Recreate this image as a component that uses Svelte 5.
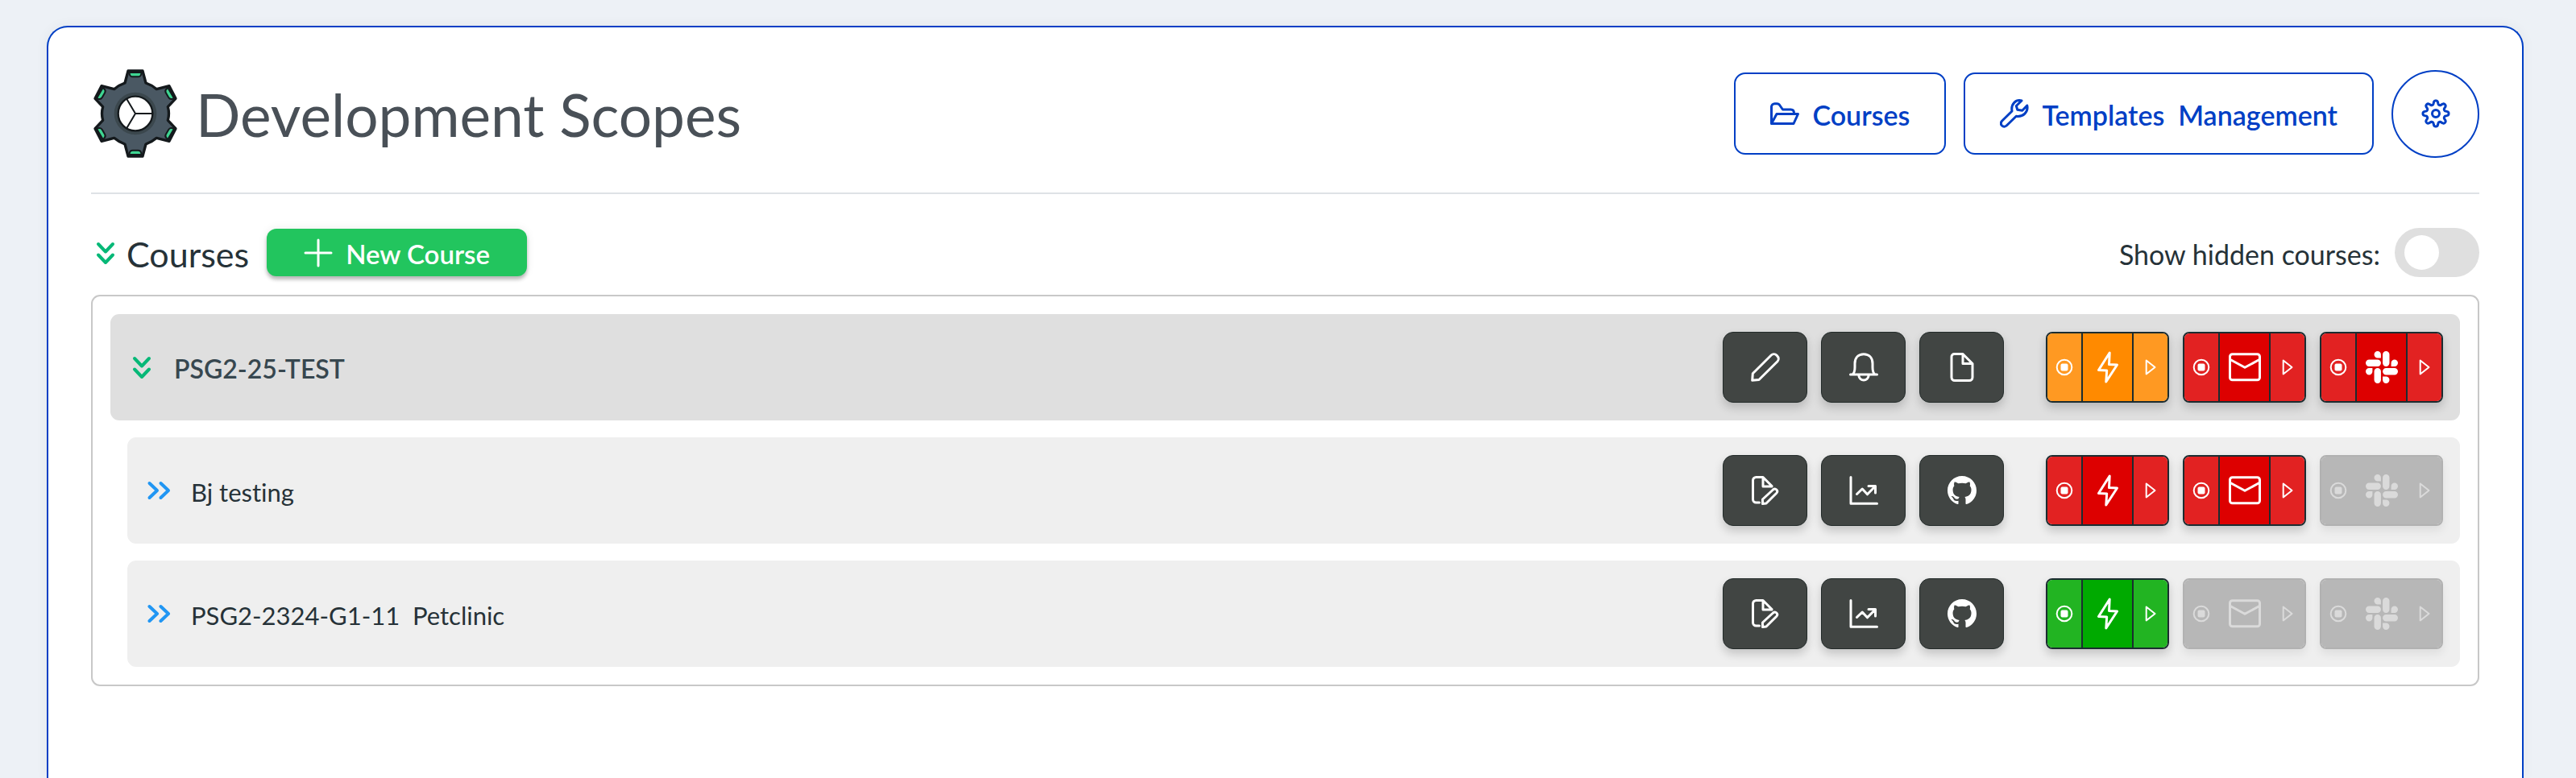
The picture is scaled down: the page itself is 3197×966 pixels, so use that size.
<script>
  // Outline of the eight-toothed settings cog, centred in a 36-unit box.
  const cogPoints = Array.from({ length: 192 }, (_, i) => {
    const a = (i / 192) * Math.PI * 2;
    const r = 13.7 + 2.3 * (Math.tanh(1.6 * Math.cos(8 * a)) / Math.tanh(1.6));
    return `${(18 + r * Math.sin(a)).toFixed(2)},${(18 - r * Math.cos(a)).toFixed(2)}`;
  }).join(' ');

  const teeth = [0, 60, 120, 180, 240, 300];

  const courseActions = [
    { icon: 'pencil', label: 'Edit course' },
    { icon: 'bell', label: 'Notifications' },
    { icon: 'file', label: 'Documents' }
  ];
  const scopeActions = [
    { icon: 'fileEdit', label: 'Edit scope' },
    { icon: 'chart', label: 'Statistics' },
    { icon: 'github', label: 'Repository' }
  ];

  const rows = [
    { name: 'PSG2-25-TEST', parent: true, actions: courseActions, states: ['orange', 'red', 'red'] },
    { name: 'Bj testing', parent: false, actions: scopeActions, states: ['red', 'red', 'off'] },
    { name: 'PSG2-2324-G1-11  Petclinic', parent: false, actions: scopeActions, states: ['green', 'off', 'off'] }
  ];
  const channels = ['bolt', 'mail', 'slack'];

  let showHidden = $state(false);
</script>

{#snippet doubleDown()}
  <svg class="chev down" viewBox="0 0 36 36" aria-hidden="true"><path d="M9 7l9 9.500 9-9.500M9 20.500l9 9.500 9-9.500" /></svg>
{/snippet}

{#snippet doubleRight()}
  <svg class="chev right" viewBox="0 0 36 36" aria-hidden="true"><path d="M6.500 9l9.500 9-9.500 9M20.500 9l9.500 9-9.500 9" /></svg>
{/snippet}

{#snippet glyph(name)}
  {#if name === 'pencil'}
    <svg class="i36" viewBox="0 0 36 36" aria-hidden="true"><path d="M1.700 34.300 2.300 25.700 25.200 3C27 1.200 30 1.200 32.200 3.300 34.800 5.800 34.800 8.800 33 10.700L10 33.500Z" /></svg>
  {:else if name === 'bell'}
    <svg class="i36" viewBox="0 0 36 36" aria-hidden="true"><path d="M1.500 27H4c2.200-1.600 3-5 3-9v-4.500C7 6 11.500 1.700 18 1.700S29 6 29 13.500V18c0 4 .8 7.400 3 9h2.500ZM11.800 28c.4 3.600 3 6 6.200 6s5.800-2.400 6.200-6" /></svg>
  {:else if name === 'file'}
    <svg class="i36" viewBox="0 0 36 36" aria-hidden="true"><path d="M8.500 1.500H19L31 13.500V30.500a4 4 0 0 1-4 4H9a4 4 0 0 1-4-4V5A3.500 3.500 0 0 1 8.500 1.500ZM19 1.500V13.500H31" /></svg>
  {:else if name === 'fileEdit'}
    <svg class="i36" viewBox="0 0 36 36" aria-hidden="true"><path d="M10.500 33H6.500a4 4 0 0 1-4-4V5.500a4 4 0 0 1 4-4H15L26 12.500M15 1.500V13H26M14.500 34.500V29L27.500 17c1.400-1.200 3.200-1.100 4.300 0s1.200 2.900 0 4.200L19 34Z" /></svg>
  {:else if name === 'chart'}
    <svg class="i36" viewBox="0 0 36 36" aria-hidden="true"><path d="M2 1.500V34.300H34.500M9.500 22.500 16.200 16 22.500 22.800 32.500 12.500M24 12.500H32.500V21" /></svg>
  {:else if name === 'github'}
    <svg class="i36 solid" viewBox="0 0 16 16" aria-hidden="true"><path d="M8 0C3.580 0 0 3.580 0 8c0 3.540 2.290 6.530 5.470 7.590.4.070.55-.17.55-.38 0-.19-.01-.82-.01-1.490-2.010.37-2.530-.49-2.690-.94-.09-.23-.48-.94-.82-1.130-.28-.15-.68-.52-.01-.53.63-.01 1.080.58 1.230.82.72 1.210 1.870.87 2.330.66.07-.52.28-.87.51-1.070-1.780-.2-3.640-.89-3.640-3.950 0-.87.31-1.590.82-2.150-.08-.2-.36-1.020.08-2.120 0 0 .67-.21 2.200.82.64-.18 1.320-.27 2-.27.68 0 1.360.09 2 .27 1.530-1.040 2.200-.82 2.200-.82.44 1.100.16 1.920.08 2.120.51.56.82 1.270.82 2.150 0 3.070-1.870 3.750-3.650 3.950.29.25.54.73.54 1.480 0 1.070-.01 1.930-.01 2.200 0 .21.15.46.55.38A8.013 8.013 0 0 0 16 8c0-4.420-3.580-8-8-8z" /></svg>
  {:else if name === 'bolt'}
    <svg class="i40" viewBox="0 0 40 40" aria-hidden="true"><path d="M22.200 2 8.500 23.500 18.700 24 17.800 38 31.500 17 21.500 16.500Z" /></svg>
  {:else if name === 'mail'}
    <svg class="i40" viewBox="0 0 40 40" aria-hidden="true"><path d="M4.500 3.700H35.500a3 3 0 0 1 3 3V32.800a3 3 0 0 1-3 3H4.500a3 3 0 0 1-3-3V6.700a3 3 0 0 1 3-3ZM2 10.500 20 20.300 38 10.500" /></svg>
  {:else if name === 'slack'}
    <svg class="i40 solid" viewBox="0 0 24 24" aria-hidden="true"><path d="M5.042 15.165a2.528 2.528 0 0 1-2.520 2.523A2.528 2.528 0 0 1 0 15.165a2.527 2.527 0 0 1 2.522-2.520h2.520v2.520zM6.313 15.165a2.527 2.527 0 0 1 2.521-2.520 2.527 2.527 0 0 1 2.521 2.520v6.313A2.528 2.528 0 0 1 8.834 24a2.528 2.528 0 0 1-2.521-2.522v-6.313zM8.834 5.042a2.528 2.528 0 0 1-2.521-2.520A2.528 2.528 0 0 1 8.834 0a2.528 2.528 0 0 1 2.521 2.522v2.520H8.834zM8.834 6.313a2.528 2.528 0 0 1 2.521 2.521 2.528 2.528 0 0 1-2.521 2.521H2.522A2.528 2.528 0 0 1 0 8.834a2.528 2.528 0 0 1 2.522-2.521h6.312zM18.956 8.834a2.528 2.528 0 0 1 2.522-2.521A2.528 2.528 0 0 1 24 8.834a2.528 2.528 0 0 1-2.522 2.521h-2.522V8.834zM17.688 8.834a2.528 2.528 0 0 1-2.523 2.521 2.527 2.527 0 0 1-2.520-2.521V2.522A2.527 2.527 0 0 1 15.165 0a2.528 2.528 0 0 1 2.523 2.522v6.312zM15.165 18.956a2.528 2.528 0 0 1 2.523 2.522A2.528 2.528 0 0 1 15.165 24a2.527 2.527 0 0 1-2.520-2.522v-2.522h2.520zM15.165 17.688a2.527 2.527 0 0 1-2.520-2.523 2.526 2.526 0 0 1 2.520-2.520h6.313A2.527 2.527 0 0 1 24 15.165a2.528 2.528 0 0 1-2.522 2.523h-6.313z" /></svg>
  {/if}
{/snippet}

<main class="page">
  <div class="card">
    <header>
      <svg class="logo" viewBox="-165 -165 330 330" aria-hidden="true">
        <path
          d="M-27-159H27L39-114Q62-106 79-91L126-103 150-56 121-25Q128 0 121 25L150 56 126 103 79 91Q62 106 39 114L27 159H-27L-39 114Q-62 106-79 91L-126 103-150 56-121 25Q-128 0-121-25L-150-56-126-103-79-91Q-62-106-39-114Z"
          fill="#4a5863" stroke="#14191c" stroke-width="10" stroke-linejoin="round" />
        {#each teeth as angle}
          <path d="M-22-153H22V-148Q20-137 10-137H-10Q-20-137-22-148Z" transform="rotate({angle})" fill="#3fd592" stroke="#14191c" stroke-width="6" />
        {/each}
        <circle r="79" fill="#3b474d" stroke="none" />
        <circle r="64" fill="#fff" stroke="#14191c" stroke-width="7" />
        <path d="M64 0H0L-32-54M0 0-32 54" fill="none" stroke="#14191c" stroke-width="6" />
      </svg>
      <h1>Development Scopes</h1>
      <nav>
        <button class="outline">
          <svg class="i36" viewBox="0 0 36 36" aria-hidden="true"><path d="M1.500 30.500V9.500A4 4 0 0 1 5.500 5.700H8.500C10 5.700 10.500 6 11.300 7L15.500 13H25.500C28 13 29.500 14.500 29.500 17.500M1.500 30.500 8 18.500H34.500L29 30.500Z" /></svg>
          <span>Courses</span>
        </button>
        <button class="outline">
          <svg class="i36" viewBox="0 0 36 36" aria-hidden="true"><path d="M27 2C20 0 13.500 6 15 15L2.800 27C.9 29 1 31.300 2.600 33c1.700 1.700 4.100 1.600 5.900-.2L20.300 21.200C29 22.500 35.500 16 33.800 8L27.800 14.300 21.800 13.200 20.300 8.500Z" /></svg>
          <span>Templates  Management</span>
        </button>
        <button class="outline round" aria-label="Settings">
          <svg class="i36" viewBox="0 0 36 36" aria-hidden="true"><polygon points={cogPoints} /><circle cx="18" cy="18" r="4.500" /></svg>
        </button>
      </nav>
    </header>

    <section>
      <div class="bar">
        {@render doubleDown()}
        <h2>Courses</h2>
        <button class="new">
          <svg class="i36" viewBox="0 0 36 36" aria-hidden="true"><path d="M18 2V34M2 18H34" /></svg>
          <span>New Course</span>
        </button>
        <label for="show-hidden">Show hidden courses:</label>
        <input id="show-hidden" type="checkbox" role="switch" bind:checked={showHidden} />
      </div>

      <ul class="panel">
        {#each rows as row}
          <li class:parent={row.parent}>
            {#if row.parent}{@render doubleDown()}{:else}{@render doubleRight()}{/if}
            <span class="name">{row.name}</span>
            <div class="actions">
              {#each row.actions as action}
                <button class="tool" aria-label={action.label}>{@render glyph(action.icon)}</button>
              {/each}
            </div>
            <div class="groups">
              {#each channels as channel, i}
                <div class="group {row.states[i]}">
                  <button class="side" aria-label="Stop {channel}" disabled={row.states[i] === 'off'}>
                    <svg class="stop" viewBox="0 0 22 22" aria-hidden="true"><circle cx="11" cy="11" r="9.300" /><rect x="6.500" y="6.500" width="9" height="9" rx="2" /></svg>
                  </button>
                  <button class="mid" aria-label="Open {channel}" disabled={row.states[i] === 'off'}>{@render glyph(channel)}</button>
                  <button class="side" aria-label="Start {channel}" disabled={row.states[i] === 'off'}>
                    <svg class="play" viewBox="0 0 22 22" aria-hidden="true"><path d="M5.700 2.500 16.500 11 5.700 19.500Z" /></svg>
                  </button>
                </div>
              {/each}
            </div>
          </li>
        {/each}
      </ul>
    </section>
  </div>
</main>

<style>
  :global(body) {
    background: #edf1f6;
  }

  .page {
    box-sizing: border-box;
    min-height: 100vh;
    display: flex;
    padding: 32px 65px 0 58px;
    font-family: Lato, sans-serif;
    font-variant-ligatures: none;
    color: #263238;
  }

  .card {
    flex: 1;
    min-width: 0;
    padding: 52px 53px 0;
    background: #fff;
    border: 2px solid #003fc5;
    border-bottom: 0;
    border-radius: 26px 26px 0 0;
    box-shadow: 0 0 16px rgba(0, 0, 0, 0.05);
  }

  header {
    display: flex;
    align-items: center;
    gap: 20px;
    padding-bottom: 43px;
    border-bottom: 2px solid #dee2e6;
  }

  .logo {
    width: 110px;
    height: 110px;
    flex: none;
  }

  h1 {
    margin: 0;
    flex: 1;
    font-size: 73px;
    line-height: 1;
    font-weight: 400;
    color: #495057;
  }

  h1,
  h2,
  label,
  .name,
  button span {
    padding-top: 3px;
  }

  nav {
    display: flex;
    align-items: center;
    gap: 22px;
  }

  button {
    font: inherit;
    color: inherit;
    margin: 0;
    padding: 0;
    border: 0;
    box-sizing: border-box;
    display: flex;
    align-items: center;
    justify-content: center;
    cursor: pointer;
  }

  svg {
    display: block;
    fill: none;
    stroke: currentColor;
    stroke-width: 3;
    stroke-linecap: round;
    stroke-linejoin: round;
  }

  .i36 {
    width: 36px;
    height: 36px;
  }

  .i40 {
    width: 40px;
    height: 40px;
  }

  .solid {
    fill: currentColor;
    stroke: none;
  }

  .outline {
    height: 102px;
    padding: 0 43px;
    gap: 16px;
    background: #fff;
    border: 2px solid #003fc5;
    border-radius: 14px;
    color: #003fc5;
    font-size: 34px;
    font-weight: 600;
    white-space: pre;
  }

  .outline.round {
    width: 109px;
    height: 109px;
    padding: 0;
    border-radius: 50%;
  }

  .bar {
    display: flex;
    align-items: center;
    height: 61px;
    margin: 42px 0 22px;
  }

  .chev {
    flex: none;
    width: 36px;
    height: 36px;
    stroke-width: 4;
  }

  .down {
    color: #06b877;
  }

  .right {
    color: #2196f3;
  }

  h2 {
    margin: 0 22px 0 8px;
    font-size: 43px;
    font-weight: 400;
  }

  .new {
    height: 59px;
    padding: 0 46px;
    gap: 16px;
    background: #22c55e;
    border-radius: 12px;
    box-shadow: 0 4px 4px rgba(0, 0, 0, 0.25), 0 0 12px rgba(0, 0, 0, 0.08);
    color: #fff;
    font-size: 33px;
    font-weight: 600;
  }

  label {
    margin-left: auto;
    padding-right: 18px;
    font-size: 34px;
  }

  input {
    appearance: none;
    margin: 0;
    box-sizing: border-box;
    width: 105px;
    height: 61px;
    padding: 9px 12px;
    border-radius: 31px;
    background: #dfdfdf;
    cursor: pointer;
  }

  input::before {
    content: '';
    display: block;
    width: 43px;
    height: 43px;
    border-radius: 50%;
    background: #fff;
  }

  input:checked {
    background: #22c55e;
  }

  input:checked::before {
    margin-left: auto;
  }

  .panel {
    list-style: none;
    margin: 0;
    padding: 22px;
    border: 2px solid #c8c8c8;
    border-radius: 11px;
    display: flex;
    flex-direction: column;
    gap: 21px;
  }

  li {
    display: flex;
    align-items: center;
    margin-left: 21px;
    padding: 22px 21px;
    border-radius: 11px;
    background: #efefef;
    font-size: 31px;
  }

  .parent {
    margin-left: 0;
    background: #dfdfdf;
    font-size: 32px;
    font-weight: 600;
    color: #37474f;
  }

  .name {
    flex: 1;
    margin-left: 22px;
    white-space: pre;
  }

  .actions {
    display: flex;
    gap: 17px;
    margin-right: 52px;
  }

  .tool {
    width: 105px;
    height: 88px;
    background: #414543;
    border: 1px solid #232b2a;
    border-radius: 13px;
    box-shadow: 0 6px 12px rgba(0, 0, 0, 0.18);
    color: #fff;
  }

  .groups {
    display: flex;
    gap: 17px;
  }

  .group {
    box-sizing: border-box;
    display: flex;
    width: 153px;
    height: 88px;
    overflow: hidden;
    border: 2px solid #1b2c30;
    border-radius: 8px;
    box-shadow: 0 6px 12px rgba(0, 0, 0, 0.18);
    color: #fff;
  }

  .side {
    flex: 1;
  }

  .mid {
    width: 65px;
    border: solid #1b2c30;
    border-width: 0 2px;
  }

  .stop,
  .play {
    width: 22px;
    height: 22px;
    stroke-width: 2;
  }

  .stop rect {
    fill: currentColor;
    stroke: none;
  }

  .orange .side {
    background: #ff9922;
  }

  .orange .mid {
    background: #ff8a00;
  }

  .red .side {
    background: #e22222;
  }

  .red .mid {
    background: #dd0000;
  }

  .green .side {
    background: #22b422;
  }

  .green .mid {
    background: #00aa00;
  }

  .off {
    border-color: #b1b1b1;
    box-shadow: 0 6px 12px rgba(0, 0, 0, 0.07);
    color: #dadada;
  }

  .off button {
    background: #b7b7b7;
    border-color: #b7b7b7;
    cursor: default;
  }
</style>
